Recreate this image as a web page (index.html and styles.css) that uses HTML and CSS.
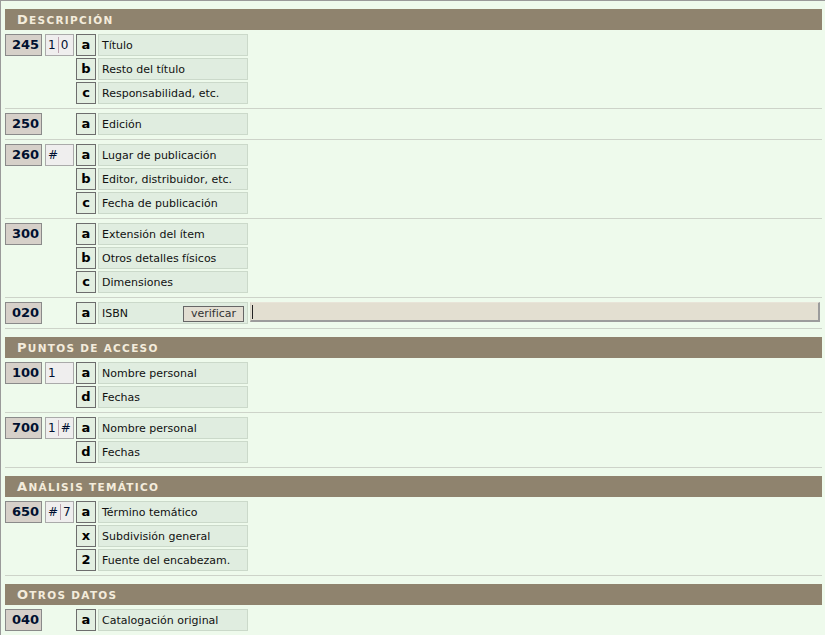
FILE: index.html
```html
<!DOCTYPE html>
<html lang="es">
<head>
<meta charset="utf-8">
<title>Catalogación</title>
<link rel="stylesheet" href="styles.css">
</head>
<body>
<div class="page">

  <section class="sec">
    <div class="sec-head"><span class="cap">D</span>escripción</div>

    <div class="field">
      <div class="tagcol"><span class="tag">245</span><span class="ind">1<i class="div"></i>0</span></div>
      <div class="subs">
        <div class="sub"><span class="code">a</span><span class="label">Título</span></div>
        <div class="sub"><span class="code">b</span><span class="label">Resto del título</span></div>
        <div class="sub"><span class="code">c</span><span class="label">Responsabilidad, etc.</span></div>
      </div>
    </div>

    <div class="field">
      <div class="tagcol"><span class="tag">250</span></div>
      <div class="subs">
        <div class="sub"><span class="code">a</span><span class="label">Edición</span></div>
      </div>
    </div>

    <div class="field">
      <div class="tagcol"><span class="tag">260</span><span class="ind">#</span></div>
      <div class="subs">
        <div class="sub"><span class="code">a</span><span class="label">Lugar de publicación</span></div>
        <div class="sub"><span class="code">b</span><span class="label">Editor, distribuidor, etc.</span></div>
        <div class="sub"><span class="code">c</span><span class="label">Fecha de publicación</span></div>
      </div>
    </div>

    <div class="field">
      <div class="tagcol"><span class="tag">300</span></div>
      <div class="subs">
        <div class="sub"><span class="code">a</span><span class="label">Extensión del ítem</span></div>
        <div class="sub"><span class="code">b</span><span class="label">Otros detalles físicos</span></div>
        <div class="sub"><span class="code">c</span><span class="label">Dimensiones</span></div>
      </div>
    </div>

    <div class="field">
      <div class="tagcol"><span class="tag">020</span></div>
      <div class="subs wide">
        <div class="sub"><span class="code">a</span><span class="label label-btn">ISBN<button class="btn" type="button">verificar</button></span><span class="entry"><span class="caret"></span></span></div>
      </div>
    </div>
  </section>

  <section class="sec">
    <div class="sec-head"><span class="cap">P</span>untos de acceso</div>

    <div class="field">
      <div class="tagcol"><span class="tag">100</span><span class="ind">1</span></div>
      <div class="subs">
        <div class="sub"><span class="code">a</span><span class="label">Nombre personal</span></div>
        <div class="sub"><span class="code">d</span><span class="label">Fechas</span></div>
      </div>
    </div>

    <div class="field">
      <div class="tagcol"><span class="tag">700</span><span class="ind">1<i class="div"></i>#</span></div>
      <div class="subs">
        <div class="sub"><span class="code">a</span><span class="label">Nombre personal</span></div>
        <div class="sub"><span class="code">d</span><span class="label">Fechas</span></div>
      </div>
    </div>
  </section>

  <section class="sec">
    <div class="sec-head"><span class="cap">A</span>nálisis temático</div>

    <div class="field">
      <div class="tagcol"><span class="tag">650</span><span class="ind">#<i class="div"></i>7</span></div>
      <div class="subs">
        <div class="sub"><span class="code">a</span><span class="label">Término temático</span></div>
        <div class="sub"><span class="code">x</span><span class="label">Subdivisión general</span></div>
        <div class="sub"><span class="code">2</span><span class="label">Fuente del encabezam.</span></div>
      </div>
    </div>
  </section>

  <section class="sec">
    <div class="sec-head"><span class="cap">O</span>tros datos</div>

    <div class="field">
      <div class="tagcol"><span class="tag">040</span></div>
      <div class="subs">
        <div class="sub"><span class="code">a</span><span class="label">Catalogación original</span></div>
      </div>
    </div>
  </section>

</div>
</body>
</html>
```

FILE: styles.css
```css
html, body {
  margin: 0;
  padding: 0;
  background: #eefaec;
}

body {
  font-family: "DejaVu Sans", Verdana, sans-serif;
  font-size: 11px;
  color: #111;
}

.page {
  border-top: 1px solid #9a9a9a;
  border-left: 1px solid #9a9a9a;
  padding: 0 3px 0 4px;
  min-height: 100vh;
  box-sizing: border-box;
}

.sec {
  margin-top: 8px;
}

.sec-head {
  height: 21px;
  box-sizing: border-box;
  background: #8f836e;
  color: #f4ecdc;
  font-weight: bold;
  font-size: 10.5px;
  text-transform: uppercase;
  letter-spacing: 1.3px;
  padding-left: 12px;
  line-height: 22px;
}

.sec-head .cap {
  font-size: 13px;
}

.field {
  display: flex;
  padding: 4px 0;
  border-bottom: 1px solid #cdd3c9;
}

.tagcol {
  width: 71px;
  flex: none;
  display: flex;
  align-items: flex-start;
  gap: 3px;
}

.tag {
  width: 37px;
  height: 22px;
  box-sizing: border-box;
  background: #d6d0c9;
  border: 1px solid #8a8a8a;
  color: #001030;
  font-weight: bold;
  font-size: 13px;
  line-height: 20px;
  padding-left: 6px;
}

.ind {
  width: 29px;
  height: 22px;
  box-sizing: border-box;
  background: #efeeee;
  border: 1px solid #aaa;
  color: #001030;
  font-size: 12px;
  line-height: 20px;
  padding-left: 2px;
  display: flex;
  align-items: center;
  overflow: hidden;
}

.ind .div {
  display: block;
  flex: none;
  width: 1px;
  height: 16px;
  background: #bda3b0;
  margin: 0 2px;
}

.subs {
  display: flex;
  flex-direction: column;
  gap: 2px;
}

.subs.wide {
  flex: 1;
}

.sub {
  display: flex;
  gap: 2px;
  height: 22px;
}

.code {
  width: 20px;
  height: 22px;
  box-sizing: border-box;
  flex: none;
  background: #e3efe1;
  border: 1px solid #6d6d6d;
  color: #000;
  font-weight: bold;
  font-size: 13px;
  line-height: 20px;
  text-align: center;
}

.label {
  width: 150px;
  height: 22px;
  box-sizing: border-box;
  flex: none;
  background: #e0ede0;
  border: 1px solid #cbd9ca;
  padding-left: 3px;
  line-height: 21px;
  color: #111;
}

.label-btn {
  display: flex;
  align-items: center;
  justify-content: space-between;
  padding-right: 3px;
}

.btn {
  font-family: "DejaVu Sans", Verdana, sans-serif;
  font-size: 11px;
  color: #333;
  background: #e2ded2;
  border: 1px solid #666;
  height: 16px;
  width: 61px;
  padding: 0;
  line-height: 14px;
  margin-top: 1px;
}

.entry {
  flex: 1;
  height: 20px;
  box-sizing: border-box;
  background: #e3dfd1;
  border-top: 1px solid #e8e4d8;
  border-left: 1px solid #d8d4c8;
  border-right: 2px solid #9c9c9c;
  border-bottom: 2px solid #9c9c9c;
  margin-right: 2px;
  display: flex;
  align-items: center;
  padding-left: 1px;
}

.caret {
  width: 1px;
  height: 14px;
  background: #222;
}
```
